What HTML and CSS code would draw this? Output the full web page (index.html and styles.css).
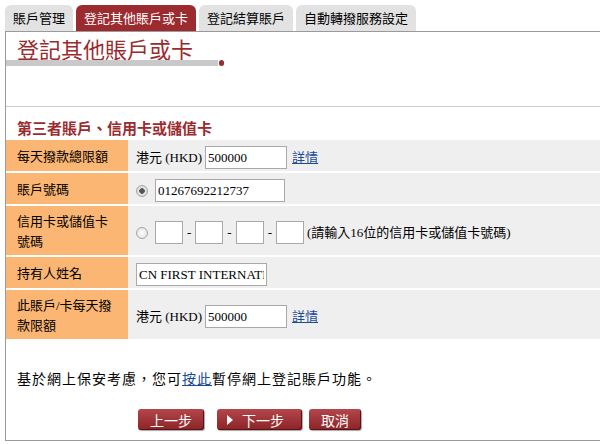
FILE: index.html
```html
<!DOCTYPE html>
<html lang="zh-Hant">

<head>
    <meta charset="UTF-8">
    <meta name="viewport" content="width=device-width, initial-scale=1.0">
    <title>登記其他賬戶或卡</title>
    <link rel="stylesheet" href="styles.css">
</head>

<body>
    <nav class="tabs">
        <a class="tab" href="#">賬戶管理</a>
        <a class="tab active" href="#">登記其他賬戶或卡</a>
        <a class="tab" href="#">登記結算賬戶</a>
        <a class="tab" href="#">自動轉撥服務設定</a>
    </nav>
    <div class="panel">
        <h1 class="page-title">登記其他賬戶或卡</h1>
        <div class="title-bar"><span class="bar"></span><span class="dot"></span></div>
        <div class="divider"></div>

        <h2 class="section-title">第三者賬戶、信用卡或儲值卡</h2>
        <div class="form-table">
            <div class="form-row">
                <div class="label">每天撥款總限額</div>
                <div class="value">
                    <span>港元 (HKD)</span>
                    <input class="text-input amount" type="text" value="500000">
                    <a class="link" href="#">詳情</a>
                </div>
            </div>
            <div class="form-row">
                <div class="label">賬戶號碼</div>
                <div class="value">
                    <input class="radio" type="radio" name="target" checked>
                    <input class="text-input account" type="text" value="01267692212737">
                </div>
            </div>
            <div class="form-row tall">
                <div class="label">信用卡或儲值卡號碼</div>
                <div class="value">
                    <input class="radio" type="radio" name="target">
                    <input class="text-input card" type="text">
                    <span class="dash">-</span>
                    <input class="text-input card" type="text">
                    <span class="dash">-</span>
                    <input class="text-input card" type="text">
                    <span class="dash">-</span>
                    <input class="text-input card" type="text">
                    <span class="hint">(請輸入16位的信用卡或儲值卡號碼)</span>
                </div>
            </div>
            <div class="form-row">
                <div class="label">持有人姓名</div>
                <div class="value">
                    <input class="text-input name" type="text" value="CN FIRST INTERNATIONAL">
                </div>
            </div>
            <div class="form-row tall">
                <div class="label">此賬戶/卡每天撥款限額</div>
                <div class="value">
                    <span>港元 (HKD)</span>
                    <input class="text-input amount" type="text" value="500000">
                    <a class="link" href="#">詳情</a>
                </div>
            </div>
        </div>

        <p class="notice">基於網上保安考慮，您可<a class="link" href="#">按此</a>暫停網上登記賬戶功能。</p>

        <div class="buttons">
            <button class="btn btn-back">上一步</button>
            <button class="btn btn-next"><span class="arrow"></span>下一步</button>
            <button class="btn">取消</button>
        </div>
    </div>
</body>

</html>
```

FILE: styles.css
```css
body {
    font-family: "Liberation Serif", "Noto Sans CJK TC", serif;
    font-size: 13px;
    line-height: 20px;
    margin: 0;
    padding: 5px 0 0 5px;
    background-color: #ffffff;
    color: #000000;
}

.tabs {
    display: flex;
    gap: 3px;
    height: 26px;
}

.tab {
    font-family: "Noto Sans CJK TC", sans-serif;
    font-size: 13px;
    line-height: 26px;
    padding: 0 8px;
    background: #e2e2e2;
    color: #000000;
    text-decoration: none;
    border-radius: 6px 6px 0 0;
}

.tab.active {
    background: #9b2b2f;
    color: #ffffff;
}

.panel {
    border-top: 1px solid #9a9a9a;
    border-left: 1px solid #9a9a9a;
    border-bottom: 1px solid #9a9a9a;
    padding-bottom: 10px;
}

.page-title {
    font-family: "Noto Sans CJK TC", sans-serif;
    font-size: 22px;
    font-weight: normal;
    line-height: 24px;
    color: #9b2b2f;
    margin: 4px 0 0 11px;
}

.title-bar {
    display: flex;
    align-items: center;
    height: 6px;
}

.title-bar .bar {
    width: 212px;
    height: 6px;
    background: #c9c9c9;
}

.title-bar .dot {
    width: 5px;
    height: 6px;
    margin-left: 1px;
    border-radius: 3px;
    background: #9b2b2f;
}

.divider {
    margin-top: 40px;
    border-top: 1px solid #cccccc;
}

.section-title {
    font-family: "Noto Sans CJK TC", sans-serif;
    font-size: 15px;
    font-weight: bold;
    line-height: 20px;
    color: #9b2b2f;
    margin: 11px 0 2px 11px;
}

.form-table {
    display: flex;
    flex-direction: column;
    gap: 2px;
}

.form-row {
    display: grid;
    grid-template-columns: 122px 1fr;
    min-height: 31px;
}

.form-row.tall {
    min-height: 49px;
}

.form-row .label {
    background: #fbb673;
    padding: 3px 12px 0 11px;
    display: flex;
    align-items: center;
}

.form-row .value {
    background: #efefef;
    padding: 4px 0 0 8px;
    display: flex;
    align-items: center;
    white-space: nowrap;
}

.text-input {
    box-sizing: border-box;
    height: 23px;
    border: 1px solid #a9a9a9;
    padding: 0 2px;
    margin: 0;
    font-family: "Liberation Serif", serif;
    font-size: 13px;
    background: #ffffff;
    color: #000000;
}

.text-input.amount {
    width: 82px;
    margin: 0 5px 0 3px;
}

.text-input.account {
    width: 130px;
}

.text-input.card {
    width: 28px;
}

.text-input.name {
    width: 131px;
}

.dash {
    margin: 0 4px;
}

.hint {
    margin-left: 3px;
}

.radio {
    appearance: none;
    width: 12px;
    height: 12px;
    margin: 0 7px 0 0;
    border: 1px solid #a6a6a6;
    border-radius: 50%;
    background: radial-gradient(circle, #ffffff 0, #dcdcdc 100%);
}

.radio:checked {
    background: radial-gradient(circle, #555555 0, #555555 2.5px, #e4e4e4 3px, #d6d6d6 100%);
}

.link {
    color: #1a4b9b;
    text-decoration: underline;
}

.notice {
    font-family: "Noto Sans CJK TC", sans-serif;
    font-size: 14px;
    letter-spacing: 1px;
    line-height: 20px;
    margin: 29px 0 0 11px;
}

.buttons {
    display: flex;
    margin-top: 21px;
    padding-left: 132px;
}

.btn {
    display: flex;
    align-items: center;
    height: 21px;
    padding: 0 12px;
    border: none;
    border-radius: 3px;
    background: linear-gradient(#b3474b, #8c2327);
    box-shadow: inset -1px -1px 0 #5b1215, 1px 1px 1px rgba(0, 0, 0, 0.35);
    color: #ffffff;
    font-family: "Noto Sans CJK TC", sans-serif;
    font-size: 14px;
    cursor: pointer;
    margin-right: 7px;
}

.btn-back {
    margin-right: 13px;
}

.btn-next {
    padding: 0 18px 0 10px;
}

.arrow {
    width: 0;
    height: 0;
    border-left: 6px solid #ffffff;
    border-top: 5px solid transparent;
    border-bottom: 5px solid transparent;
    margin-right: 9px;
}
```
